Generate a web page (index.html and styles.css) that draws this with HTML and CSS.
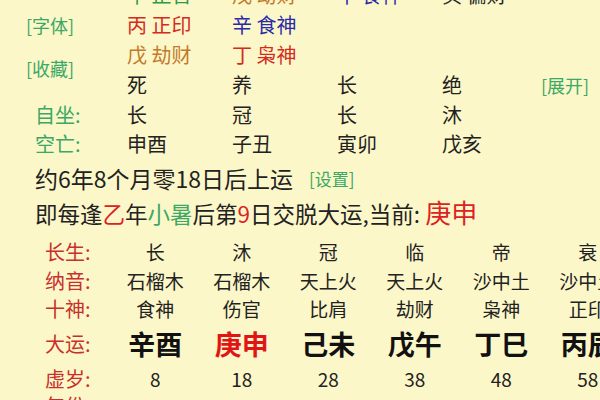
FILE: index.html
```html
<!DOCTYPE html>
<html lang="zh">
<head>
<meta charset="utf-8">
<link rel="stylesheet" href="styles.css">
</head>
<body>
<div class="page">
  <section class="top">
    <div class="labels">
      <div class="lbl-btn first">[字体]</div>
      <div class="lbl-btn second">[收藏]</div>
    </div>
    <div class="pillars">
      <div class="cell"><span class="wood">甲 正官</span></div>
      <div class="cell"><span class="earth">戊 劫财</span></div>
      <div class="cell"><span class="metal">辛 食神</span></div>
      <div class="cell"><span class="water">癸 偏财</span></div>
      <div class="cell"></div>

      <div class="cell"><span class="fire">丙 正印</span></div>
      <div class="cell"><span class="metal">辛 食神</span></div>
      <div class="cell"></div>
      <div class="cell"></div>
      <div class="cell"></div>

      <div class="cell"><span class="earth">戊 劫财</span></div>
      <div class="cell"><span class="fire">丁 枭神</span></div>
      <div class="cell"></div>
      <div class="cell"></div>
      <div class="cell"></div>

      <div class="cell">死</div>
      <div class="cell">养</div>
      <div class="cell">长</div>
      <div class="cell">绝</div>
      <div class="cell lbl-btn">[展开]</div>
    </div>
  </section>

  <section class="info">
    <div class="info-row r1">
      <div class="info-lbl">自坐:</div>
      <div class="cell">长</div>
      <div class="cell">冠</div>
      <div class="cell">长</div>
      <div class="cell">沐</div>
    </div>
    <div class="info-row r2">
      <div class="info-lbl">空亡:</div>
      <div class="cell">申酉</div>
      <div class="cell">子丑</div>
      <div class="cell">寅卯</div>
      <div class="cell">戊亥</div>
    </div>
  </section>

  <div class="start-line">
    <span class="start-text">约6年8个月零18日后上运</span>
    <span class="lbl-btn set">[设置]</span>
  </div>
  <div class="rule-line">即每逢<span class="red">乙</span>年<span class="green">小暑</span>后第<span class="red">9</span>日交脱大运,当前: <span class="red big">庚申</span></div>

  <section class="dayun">
    <div class="d-row h-cs">
      <div class="d-lbl">长生:</div>
      <div class="d-cell">长</div><div class="d-cell">沐</div><div class="d-cell">冠</div><div class="d-cell">临</div><div class="d-cell">帝</div><div class="d-cell">衰</div>
    </div>
    <div class="d-row h-ny">
      <div class="d-lbl">纳音:</div>
      <div class="d-cell">石榴木</div><div class="d-cell">石榴木</div><div class="d-cell">天上火</div><div class="d-cell">天上火</div><div class="d-cell">沙中土</div><div class="d-cell">沙中土</div>
    </div>
    <div class="d-row h-ss">
      <div class="d-lbl">十神:</div>
      <div class="d-cell">食神</div><div class="d-cell">伤官</div><div class="d-cell">比肩</div><div class="d-cell">劫财</div><div class="d-cell">枭神</div><div class="d-cell">正印</div>
    </div>
    <div class="d-row h-dy">
      <div class="d-lbl">大运:</div>
      <div class="d-cell gz">辛酉</div><div class="d-cell gz cur">庚申</div><div class="d-cell gz">己未</div><div class="d-cell gz">戊午</div><div class="d-cell gz">丁巳</div><div class="d-cell gz">丙辰</div>
    </div>
    <div class="d-row h-xs">
      <div class="d-lbl">虚岁:</div>
      <div class="d-cell">8</div><div class="d-cell">18</div><div class="d-cell">28</div><div class="d-cell">38</div><div class="d-cell">48</div><div class="d-cell">58</div>
    </div>
    <div class="d-row h-nf">
      <div class="d-lbl">年份:</div>
      <div class="d-cell">2005</div><div class="d-cell">2015</div><div class="d-cell">2025</div><div class="d-cell">2035</div><div class="d-cell">2045</div><div class="d-cell">2055</div>
    </div>
  </section>
</div>
</body>
</html>
```

FILE: styles.css
```css
html, body {
  margin: 0;
  padding: 0;
  width: 600px;
  height: 400px;
  overflow: hidden;
  background: #fcf7c9;
}
.page {
  font-family: "Noto Sans CJK SC", "Noto Sans", sans-serif;
  color: #222;
  width: 600px;
  height: 400px;
  overflow: hidden;
}
.lbl-btn {
  color: #3ba865;
  font-size: 18px;
}
.wood { color: #2f9a45; }
.earth { color: #c27a2c; }
.metal { color: #2a2aa8; }
.water { color: #2a2a2a; }
.fire { color: #d42a22; }
.red { color: #dc2222; }
.green { color: #3ba865; }

.top {
  display: flex;
  margin-top: -20px;
}
.labels {
  width: 101px;
  padding-left: 26px;
  padding-top: 30px;
}
.labels .lbl-btn {
  line-height: 30px;
  height: 30px;
}
.labels .second {
  margin-top: 13px;
}
.pillars {
  display: grid;
  grid-template-columns: 105px 105px 105px 99px auto;
  grid-auto-rows: 30px;
  font-size: 20px;
  line-height: 30px;
}
.pillars .lbl-btn {
  font-size: 18px;
}

.info {
  font-size: 20px;
}
.info-row {
  display: grid;
  grid-template-columns: 127px 105px 105px 105px 105px;
  line-height: 29px;
}
.info-lbl {
  color: #3ba865;
  padding-left: 35px;
}

.start-line {
  display: flex;
  align-items: center;
  height: 40px;
  padding-left: 35px;
  gap: 16px;
}
.start-text {
  font-size: 23px;
}
.set {
  font-size: 17px;
}
.rule-line {
  padding-left: 35px;
  font-size: 22.5px;
  line-height: 28px;
  height: 28px;
  white-space: nowrap;
}
.rule-line .big {
  font-size: 26px;
}

.dayun {
  margin-top: 10px;
}
.d-row {
  display: grid;
  grid-template-columns: 112px repeat(6, 86.5px);
  align-items: center;
  font-size: 19px;
}
.d-lbl {
  color: #c8302c;
  font-size: 20px;
  padding-left: 45px;
}
.d-cell {
  text-align: center;
}
.h-cs { height: 30px; }
.h-ny { height: 26px; }
.h-ss { height: 32px; }
.h-dy { height: 36px; }
.h-xs { height: 36px; }
.h-nf { height: 20px; align-items: start; line-height: 20px; }
.gz {
  font-size: 27px;
  font-weight: bold;
  color: #111;
}
.gz.cur {
  color: #e01515;
}
```
